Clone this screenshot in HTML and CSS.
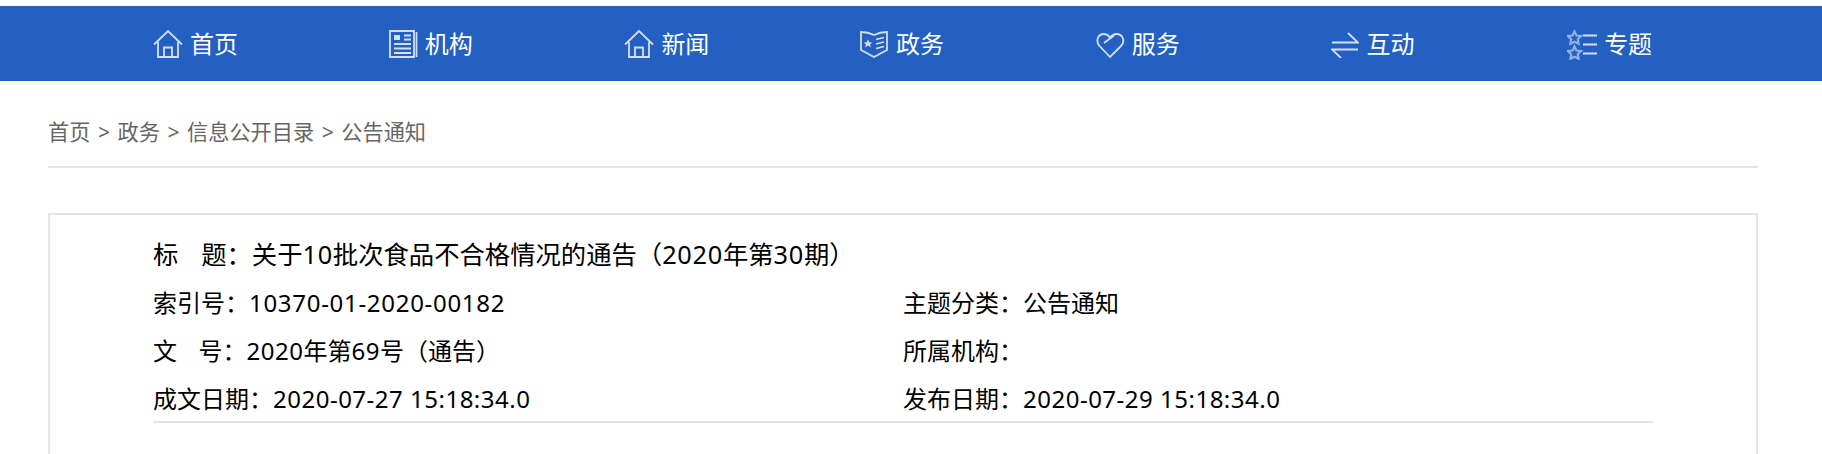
FILE: index.html
```html
<!DOCTYPE html>
<html lang="zh-CN">
<head>
<meta charset="UTF-8">
<title>公告通知</title>
<link rel="stylesheet" href="styles.css">
</head>
<body>
<nav class="nav">
<a class="nav-item">
<svg class="icon" width="30" height="28" viewBox="0 0 30 28"><path d="M1 14.500 15 1l14 13.500M5 12v15h20V12M11 27v-9.500h8V27"/></svg>
<span>首页</span>
</a>
<a class="nav-item">
<svg class="icon" width="29" height="28" viewBox="0 0 29 28"><path d="M1 1h24v26H1zM27.500 2v25M5 14h17M5 18.500h17M5 23h17M15 5.500h7M15 9.500h7"/><path class="fill" d="M5 5h6v5H5z"/></svg>
<span>机构</span>
</a>
<a class="nav-item">
<svg class="icon" width="30" height="28" viewBox="0 0 30 28"><path d="M1 14.500 15 1l14 13.500M5 12v15h20V12M11 27v-9.500h8V27"/></svg>
<span>新闻</span>
</a>
<a class="nav-item">
<svg class="icon" width="29" height="28" viewBox="0 0 29 28"><path d="M1 2c5 0 9 1 13 3 4-2 8-3 13-3v18l-13 7-13-7zM16 9.500l8-2M16 14l8-2M16 18.500l8-2"/><path class="fill" d="m8 9.500 1.500 3h3l-2.500 2 1 3-3-2-3 2 1-3-2.500-2h3z"/></svg>
<span>政务</span>
</a>
<a class="nav-item">
<svg class="icon" width="29" height="28" viewBox="0 0 29 28"><path d="M14 27 3.500 16C-.5 11.500 1.500 4 8 4c2.500 0 4.500 1.500 6 3.500C16 5 18 4 20.500 4 27 4 29.500 11.500 25 16zM18 5.500 8 13"/></svg>
<span>服务</span>
</a>
<a class="nav-item">
<svg class="icon" width="28" height="28" viewBox="0 0 28 28"><path d="M1 12.500h26L17 3M27 19.500H1L10 28"/></svg>
<span>互动</span>
</a>
<a class="nav-item">
<svg class="icon" width="30" height="32" viewBox="0 0 30 32"><path class="star" d="m7.500 3.500 2 4 4.500.6-3.200 3.200.8 4.500-4.100-2.100-4.100 2.100.8-4.500L1 8.100l4.500-.6zM7.500 18.500l2 4 4.500.6-3.200 3.200.8 4.500-4.100-2.100-4.100 2.100.8-4.500L1 23.100l4.500-.6z"/><path d="M16 7.500h14M16 16.500h14M16 25.500h14"/></svg>
<span>专题</span>
</a>
</nav>

<div class="container">
<div class="crumbs">首页<span class="sep">&gt;</span>政务<span class="sep">&gt;</span>信息公开目录<span class="sep">&gt;</span>公告通知</div>

<div class="box">
<div class="info">
<div class="row-full title">标<span class="gap"></span>题：关于<span class="num">10</span>批次食品不合格情况的通告（<span class="num">2020</span>年第<span class="num">30</span>期）</div>
<div>索引号：<span class="num code">10370-01-2020-00182</span></div>
<div>主题分类：公告通知</div>
<div>文<span class="gap"></span>号：<span class="num">2020</span>年第<span class="num">69</span>号（通告）</div>
<div>所属机构：</div>
<div>成文日期：<span class="num">2020-07-27 15:18:34.0</span></div>
<div>发布日期：<span class="num">2020-07-29 15:18:34.0</span></div>
</div>
</div>
</div>
</body>
</html>
```

FILE: styles.css
```css
* {
margin: 0;
padding: 0;
box-sizing: border-box;
}

body {
background-color: #fff;
color: #000;
font-family: "Noto Sans", "Noto Sans CJK SC", sans-serif;
overflow: hidden;
padding-top: 6px;
}

.nav {
height: 75px;
background-color: #2360c2;
padding-left: 153px;
display: grid;
grid-template-columns: repeat(7, 235.7px);
align-items: center;
}

.nav-item {
display: flex;
align-items: center;
gap: 7px;
color: #fff;
font-size: 24px;
line-height: 30px;
}

.icon {
flex-shrink: 0;
fill: none;
stroke: #d3dff3;
stroke-width: 1.800;
}

.icon .fill {
fill: #d3dff3;
stroke: none;
}

.icon .star {
stroke: #8fb0e4;
stroke-width: 2.200;
}

.container {
padding: 0 64px 0 48px;
}

.crumbs {
height: 87px;
padding-top: 36px;
font-size: 21.200px;
line-height: 30px;
color: #666;
border-bottom: 2px solid #e5e5e5;
}

.sep {
margin: 0 7.500px;
}

.box {
margin-top: 45px;
height: 300px;
border: 2px solid #e5e5e5;
padding: 14px 103px 0;
}

.info {
display: grid;
grid-template-columns: 750px 750px;
width: 1500px;
height: 194px;
border-bottom: 2px solid #e5e5e5;
font-size: 24px;
line-height: 48px;
}

.row-full {
grid-column: 1 / 3;
}

.title {
font-size: 25.330px;
line-height: 50px;
}

.title .num {
letter-spacing: 0.700px;
}

.gap {
display: inline-block;
width: 0.9em;
}

.num {
letter-spacing: 0.500px;
}

.num.code {
letter-spacing: 0.700px;
}
```
